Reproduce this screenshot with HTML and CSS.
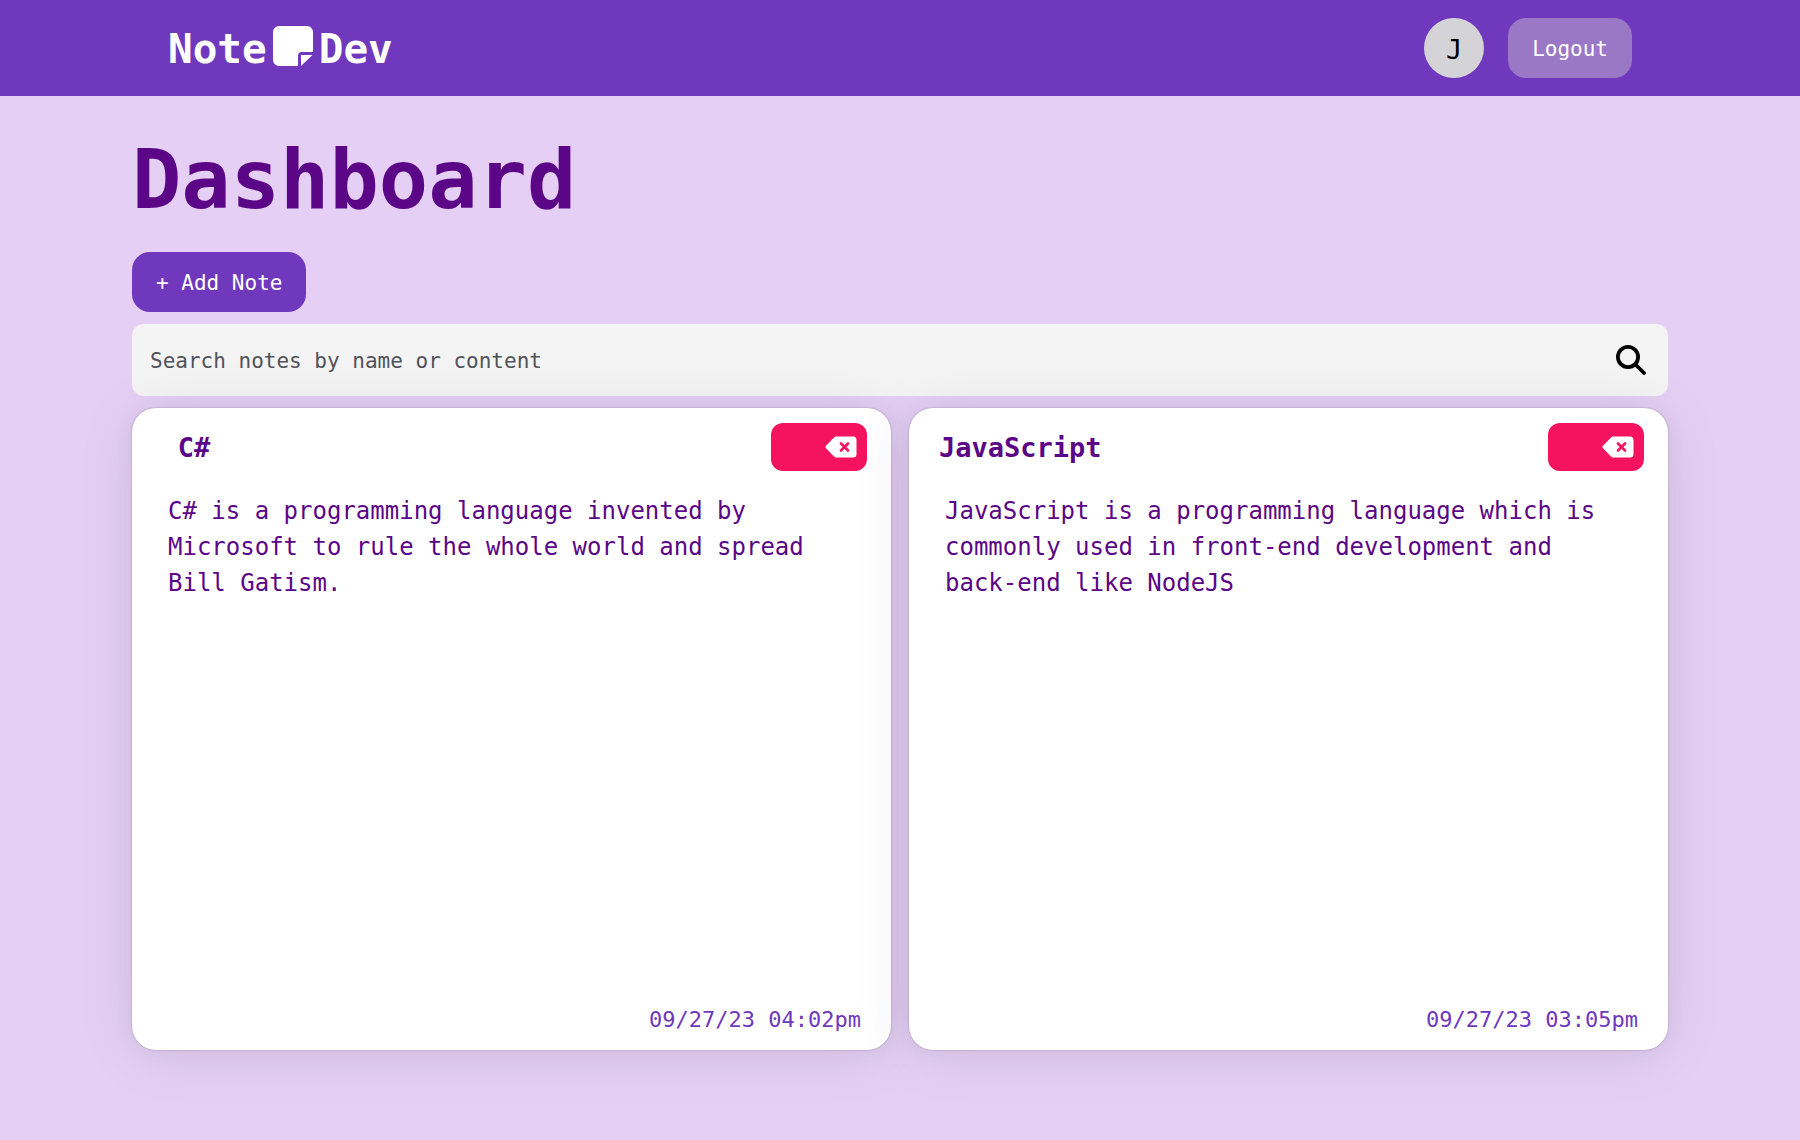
FILE: index.html
```html
<!DOCTYPE html>
<html lang="en">
<head>
<meta charset="utf-8">
<meta name="viewport" content="width=device-width, initial-scale=1">
<title>NoteDev - Dashboard</title>
<link rel="stylesheet" href="styles.css">
</head>
<body>
<header class="topbar">
  <div class="topbar-inner">
    <a class="logo" href="#">
      <span>Note</span>
      <svg class="logo-icon" viewBox="0 0 40 40" aria-hidden="true"><path fill="currentColor" d="M6 0h28a6 6 0 0 1 6 6v20H29a4 4 0 0 0-4 4v10H6a6 6 0 0 1-6-6V6a6 6 0 0 1 6-6z"/><path fill="currentColor" d="M28 29h11.500L28 40z"/></svg>
      <span>Dev</span>
    </a>
    <div class="account">
      <span class="avatar">J</span>
      <button class="btn btn-ghost" type="button">Logout</button>
    </div>
  </div>
</header>
<main class="page">
  <h1 class="page-title">Dashboard</h1>
  <button class="btn btn-primary" type="button">+ Add Note</button>
  <form class="search">
    <input class="search-input" type="text" aria-label="Search notes" placeholder="Search notes by name or content">
    <button class="search-button" type="button" aria-label="Search">
      <svg class="search-icon" viewBox="0 0 30 30" fill="none" stroke="currentColor" stroke-width="3.800" stroke-linecap="round" aria-hidden="true"><circle cx="12" cy="12" r="10.100"/><path d="M19.500 19.500l8.500 8.500"/></svg>
    </button>
  </form>
  <section class="notes">
    <article class="note">
      <div class="note-head">
        <h2 class="note-title">C#</h2>
        <button class="note-delete" type="button" aria-label="Delete note">
          <svg class="delete-icon" viewBox="0 0 32 22" aria-hidden="true"><path fill="currentColor" d="M11 .5h17a3.500 3.500 0 0 1 3.500 3.500v14a3.500 3.500 0 0 1-3.500 3.500H11a3 3 0 0 1-2-.9L1 12.200a1.700 1.700 0 0 1 0-2.400L9 1.400a3 3 0 0 1 2-.9z"/><path fill="none" stroke="#f5125f" stroke-width="2.600" stroke-linecap="round" d="M16 7.500l7 7m0-7l-7 7"/></svg>
        </button>
      </div>
      <p class="note-text">C# is a programming language invented by Microsoft to rule the whole world and spread Bill Gatism.</p>
      <time class="note-date" datetime="2023-09-27T16:02">09/27/23 04:02pm</time>
    </article>
    <article class="note">
      <div class="note-head">
        <h2 class="note-title">JavaScript</h2>
        <button class="note-delete" type="button" aria-label="Delete note">
          <svg class="delete-icon" viewBox="0 0 32 22" aria-hidden="true"><path fill="currentColor" d="M11 .5h17a3.500 3.500 0 0 1 3.500 3.500v14a3.500 3.500 0 0 1-3.500 3.500H11a3 3 0 0 1-2-.9L1 12.200a1.700 1.700 0 0 1 0-2.400L9 1.400a3 3 0 0 1 2-.9z"/><path fill="none" stroke="#f5125f" stroke-width="2.600" stroke-linecap="round" d="M16 7.500l7 7m0-7l-7 7"/></svg>
        </button>
      </div>
      <p class="note-text">JavaScript is a programming language which is commonly used in front-end development and back-end like NodeJS</p>
      <time class="note-date" datetime="2023-09-27T15:05">09/27/23 03:05pm</time>
    </article>
  </section>
</main>
</body>
</html>
```
FILE: styles.css
```css
* {
  box-sizing: border-box;
}

body {
  margin: 0;
  min-height: 100vh;
  background: #e5cff5;
  color: #5b0587;
  font-family: "DejaVu Sans Mono", monospace;
}

h1, h2, p {
  margin: 0;
}

button, input {
  border: 0;
  font: inherit;
}

button {
  cursor: pointer;
}

.topbar {
  background: #7038bc;
}

.topbar-inner {
  display: flex;
  align-items: center;
  justify-content: space-between;
  max-width: 1536px;
  min-height: 96px;
  margin: 0 auto;
  padding: 0 36px;
}

.logo {
  display: flex;
  align-items: center;
  gap: 6px;
  padding-top: 2px;
  color: #fff;
  font-size: 41px;
  font-weight: 700;
  line-height: 48px;
  text-decoration: none;
}

.logo-icon {
  width: 40px;
  height: 40px;
  margin-bottom: 6px;
}

.account {
  display: flex;
  align-items: center;
  gap: 24px;
}

.avatar {
  display: grid;
  place-items: center;
  width: 60px;
  height: 60px;
  padding-top: 2px;
  border-radius: 50%;
  background: #d4d4d8;
  color: #000;
  font-size: 27px;
}

.btn {
  height: 60px;
  padding: 2px 24px 0;
  border-radius: 18px;
  color: #fff;
  font-size: 21px;
}

.btn-ghost {
  background: #9a78c6;
}

.btn-primary {
  background: #7038bc;
}

.page {
  display: flex;
  flex-direction: column;
  align-items: flex-start;
  gap: 12px;
  max-width: 1536px;
  margin: 0 auto;
  padding-top: 36px;
}

.page-title {
  margin-bottom: 12px;
  font-size: 82px;
  font-weight: 700;
  line-height: 96px;
}

.search {
  display: flex;
  align-items: center;
  width: 100%;
  height: 72px;
  padding: 0 18px;
  border-radius: 12px;
  background: #f4f4f4;
}

.search-input {
  flex: 1;
  padding: 2px 0 0;
  background: none;
  color: #52525b;
  font-size: 21px;
  outline: 0;
}

.search-input::placeholder {
  color: #52525b;
  opacity: 1;
}

.search-button {
  display: flex;
  padding: 4px;
  background: none;
  color: #000;
}

.search-icon {
  width: 30px;
  height: 30px;
}

.notes {
  display: grid;
  grid-template-columns: 1fr 1fr;
  gap: 18px;
  width: 100%;
}

.note {
  position: relative;
  display: flex;
  flex-direction: column;
  min-height: 642px;
  padding: 15px 24px 12px;
  border-radius: 24px;
  background: #fff;
  box-shadow: 0 0 2px rgba(0, 0, 0, 0.3), 0 0 24px rgba(0, 0, 0, 0.03), 0 4px 60px rgba(0, 0, 0, 0.09);
}

.note-head {
  display: flex;
  align-items: center;
  justify-content: space-between;
  padding-left: 6px;
}

.note-title {
  min-width: 64px;
  padding-top: 2px;
  font-size: 27px;
  line-height: 36px;
  text-align: center;
}

.note-delete {
  display: flex;
  align-items: center;
  justify-content: flex-end;
  width: 96px;
  height: 48px;
  padding: 0 10px;
  border-radius: 12px;
  background: #f5125f;
  color: #fff;
}

.delete-icon {
  width: 32px;
  height: 22px;
}

.note-text {
  flex: 1;
  padding: 22px 12px;
  font-size: 24px;
  line-height: 36px;
}

.note-date {
  align-self: flex-end;
  padding-right: 6px;
  color: #7038bc;
  font-size: 22px;
  line-height: 36px;
}
```
